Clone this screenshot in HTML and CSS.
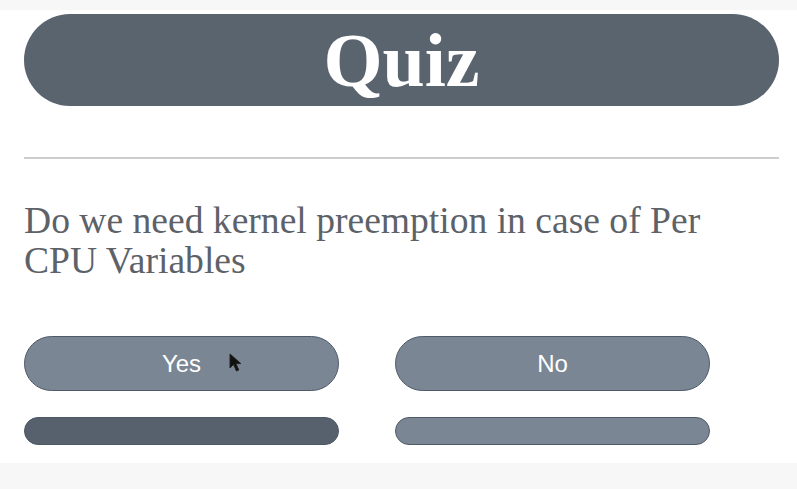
FILE: index.html
```html
<!DOCTYPE html>
<html>
<head>
<meta charset="utf-8">
<link rel="stylesheet" href="styles.css">
</head>
<body>
<main class="page">
  <h1 class="title">Quiz</h1>
  <hr class="divider">
  <p class="question">Do we need kernel preemption in case of Per CPU Variables</p>
  <div class="answers">
    <button class="answer">Yes</button>
    <button class="answer">No</button>
  </div>
  <div class="bars">
    <div class="bar bar-dark"></div>
    <div class="bar bar-light"></div>
  </div>
  <svg class="cursor" width="14" height="20" viewBox="0 0 14 20"><path d="M1 1 L1 15 L4.5 11.5 L7.5 18 L9.8 17 L6.9 10.6 L11.8 10.6 Z" fill="#111" stroke="#222" stroke-width="1"/></svg>
</main>
</body>
</html>
```
FILE: styles.css
```css
html, body {
  margin: 0;
  padding: 0;
}
body {
  background: #f7f7f7;
  width: 797px;
  height: 489px;
  overflow: hidden;
}
.page {
  position: relative;
  margin-top: 10px;
  height: 453px;
  background: #ffffff;
  padding: 4px 18px 0 24px;
  box-sizing: border-box;
}
.title {
  margin: 0;
  height: 92px;
  border-radius: 46px;
  background: #59646e;
  color: #ffffff;
  font-family: "Liberation Serif", "Times New Roman", serif;
  font-weight: bold;
  font-size: 76px;
  line-height: 92px;
  text-align: center;
}
.divider {
  margin: 51px 0 0 0;
  border: 0;
  height: 2px;
  background: #cdcdcd;
}
.question {
  margin: 42px 0 0 0;
  font-family: "Liberation Serif", "Times New Roman", serif;
  font-size: 37.6px;
  line-height: 40px;
  color: #5d6269;
  width: 720px;
}
.answers {
  display: grid;
  grid-template-columns: 315px 315px;
  column-gap: 56px;
  margin-top: 55px;
}
.answer {
  height: 55px;
  border-radius: 28px;
  border: 1px solid #4f5a68;
  background: #7a8694;
  color: #ffffff;
  font-family: "Liberation Sans", Arial, sans-serif;
  font-size: 24px;
  padding: 0;
}
.bars {
  display: grid;
  grid-template-columns: 315px 315px;
  column-gap: 56px;
  margin-top: 26px;
}
.bar {
  height: 28px;
  border-radius: 14px;
  box-sizing: border-box;
}
.bar-dark {
  background: #56616d;
  border: 1px solid #4e5864;
}
.bar-light {
  background: #7a8694;
  border: 1px solid #4f5a68;
}
.cursor {
  position: absolute;
  left: 229px;
  top: 343px;
}
```
